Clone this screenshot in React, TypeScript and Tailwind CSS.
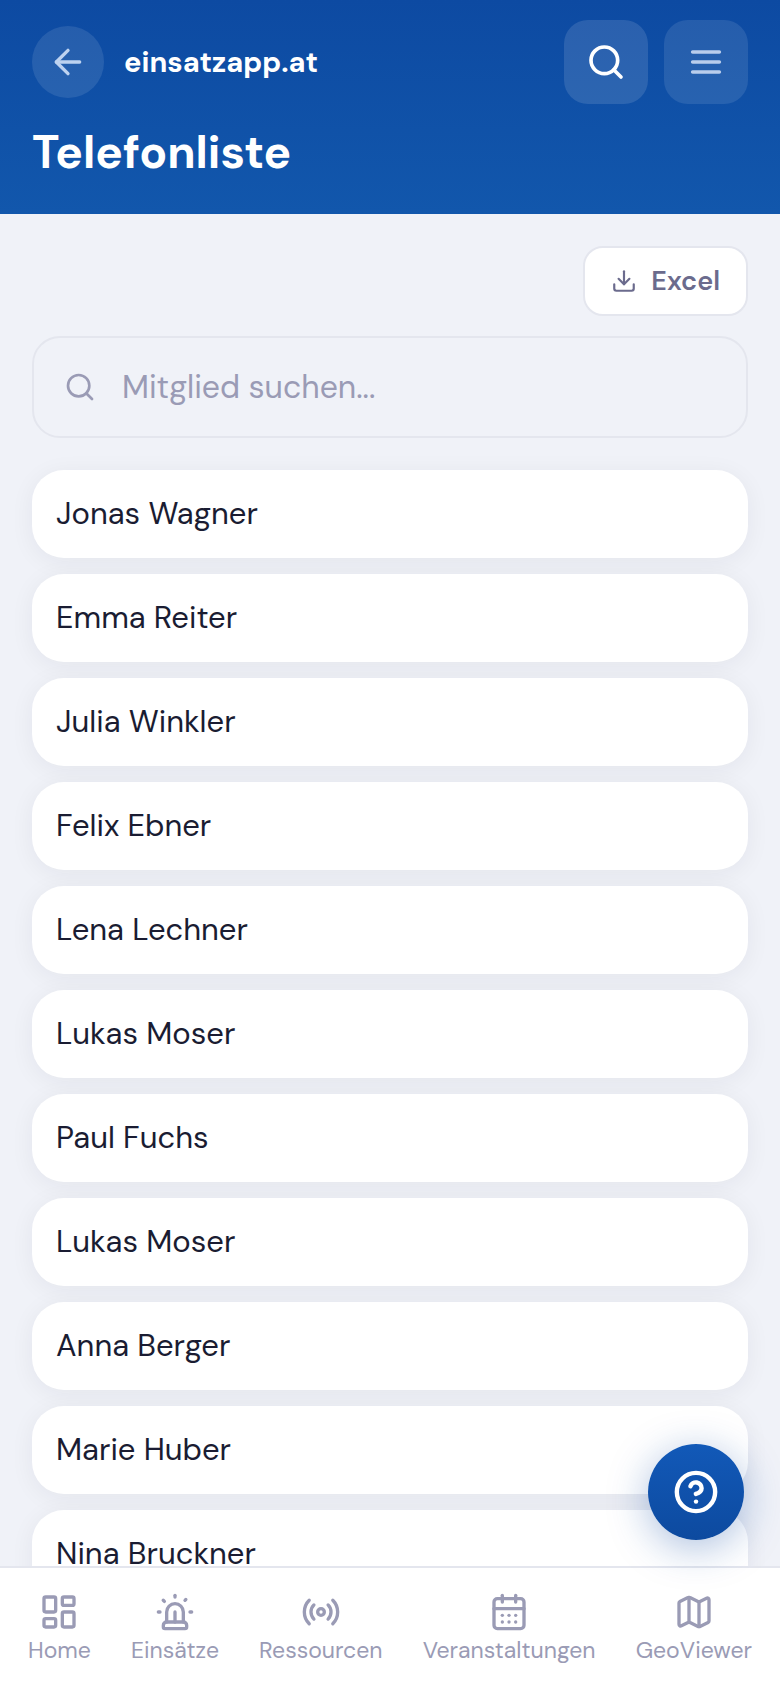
import { useState } from 'react'
import {
  ArrowLeft,
  CalendarDays,
  CircleHelp,
  Download,
  LayoutDashboard,
  Map,
  Radio,
  Search,
  Siren
} from 'lucide-react'

const members = [
  'Jonas Wagner',
  'Emma Reiter',
  'Julia Winkler',
  'Felix Ebner',
  'Lena Lechner',
  'Lukas Moser',
  'Paul Fuchs',
  'Lukas Moser',
  'Anna Berger',
  'Marie Huber',
  'Nina Bruckner'
]

const navItems = [
  { label: 'Home', icon: LayoutDashboard },
  { label: 'Einsätze', icon: Siren },
  { label: 'Ressourcen', icon: Radio },
  { label: 'Veranstaltungen', icon: CalendarDays },
  { label: 'GeoViewer', icon: Map }
]

function MenuIcon() {
  return (
    <svg
      viewBox="0 0 24 24"
      className="size-10"
      fill="none"
      stroke="currentColor"
      strokeWidth={2.2}
      strokeLinecap="round"
      aria-hidden="true"
    >
      <path d="M4 6h16M4 12h16M4 18h16" />
    </svg>
  )
}

function Header() {
  return (
    <header className="shrink-0 bg-linear-to-b from-[#0d4aa2] to-[#1257ac] px-8 pt-5 pb-8 text-white">
      <div className="flex items-center">
        <button
          aria-label="Zurück"
          className="flex size-18 items-center justify-center rounded-full bg-white/10 text-[#bdd2f0]"
        >
          <ArrowLeft className="size-10" strokeWidth={2} />
        </button>
        <span className="ml-5 text-[29px] leading-9 font-bold">einsatzapp.at</span>
        <div className="ml-auto flex gap-4">
          <button
            aria-label="Suche"
            className="flex size-21 items-center justify-center rounded-3xl bg-white/12"
          >
            <Search className="size-10" strokeWidth={2.2} />
          </button>
          <button
            aria-label="Menü"
            className="flex size-21 items-center justify-center rounded-3xl bg-white/10 text-[#b9cdec]"
          >
            <MenuIcon />
          </button>
        </div>
      </div>
      <h1 className="mt-4.5 text-[46px] leading-[60px] font-bold">Telefonliste</h1>
    </header>
  )
}

function BottomNav() {
  return (
    <nav className="flex shrink-0 justify-between border-t-2 border-[#e4e6ee] bg-white px-7 py-6">
      {navItems.map(({ label, icon: Icon }) => (
        <a key={label} href="#" className="flex flex-col items-center gap-1 text-[#9a9bb5]">
          <Icon className="size-10" strokeWidth={2} />
          <span className="text-[23px] leading-7">{label}</span>
        </a>
      ))}
    </nav>
  )
}

export default function App() {
  const [query, setQuery] = useState('')

  const visible = members.filter(name => name.toLowerCase().includes(query.toLowerCase()))

  return (
    <div className="flex h-screen flex-col bg-[#f0f2f8] font-['DM_Sans',Inter,sans-serif]">
      <Header />

      <main className="min-h-0 flex-1 overflow-y-auto px-8 pt-8 [scrollbar-width:none]">
        <div className="flex justify-end">
          <button className="flex h-[70px] items-center gap-3.5 rounded-[20px] border-2 border-[#e4e6ee] bg-white px-[26px] text-[27px] font-semibold text-[#6b6b8d]">
            <Download className="size-[26px]" strokeWidth={2} />
            Excel
          </button>
        </div>

        {/* Suchfeld */}
        <label className="mt-5 flex h-[102px] items-center gap-[26px] rounded-[28px] border-2 border-[#e4e6ee] px-[30px]">
          <Search className="size-8 shrink-0 text-[#9a9bb5]" strokeWidth={2} />
          <input
            type="text"
            aria-label="Mitglied suchen"
            placeholder="Mitglied suchen..."
            value={query}
            onChange={e => setQuery(e.target.value)}
            className="min-w-0 flex-1 bg-transparent text-[32px] text-[#1a1a2e] outline-none placeholder:text-[#9a9bb5]"
          />
        </label>

        {/* Mitglieder */}
        <ul className="mt-8 flex flex-col gap-4 pb-8">
          {visible.map((name, index) => (
            <li
              key={index}
              className="flex h-22 items-center rounded-4xl bg-white px-6 text-[31px] leading-10 text-[#1a1c32] shadow-[0_4px_24px_rgba(26,26,46,0.06)]"
            >
              {name}
            </li>
          ))}
        </ul>
      </main>

      <BottomNav />

      {/* Hilfe */}
      <button
        aria-label="Hilfe"
        className="fixed right-9 bottom-[148px] flex size-24 items-center justify-center rounded-full bg-linear-to-b from-[#1259b8] to-[#0d4a9f] text-white shadow-[0_8px_40px_rgba(13,71,161,0.35)]"
      >
        <CircleHelp className="size-[46px]" strokeWidth={2.3} />
      </button>
    </div>
  )
}
